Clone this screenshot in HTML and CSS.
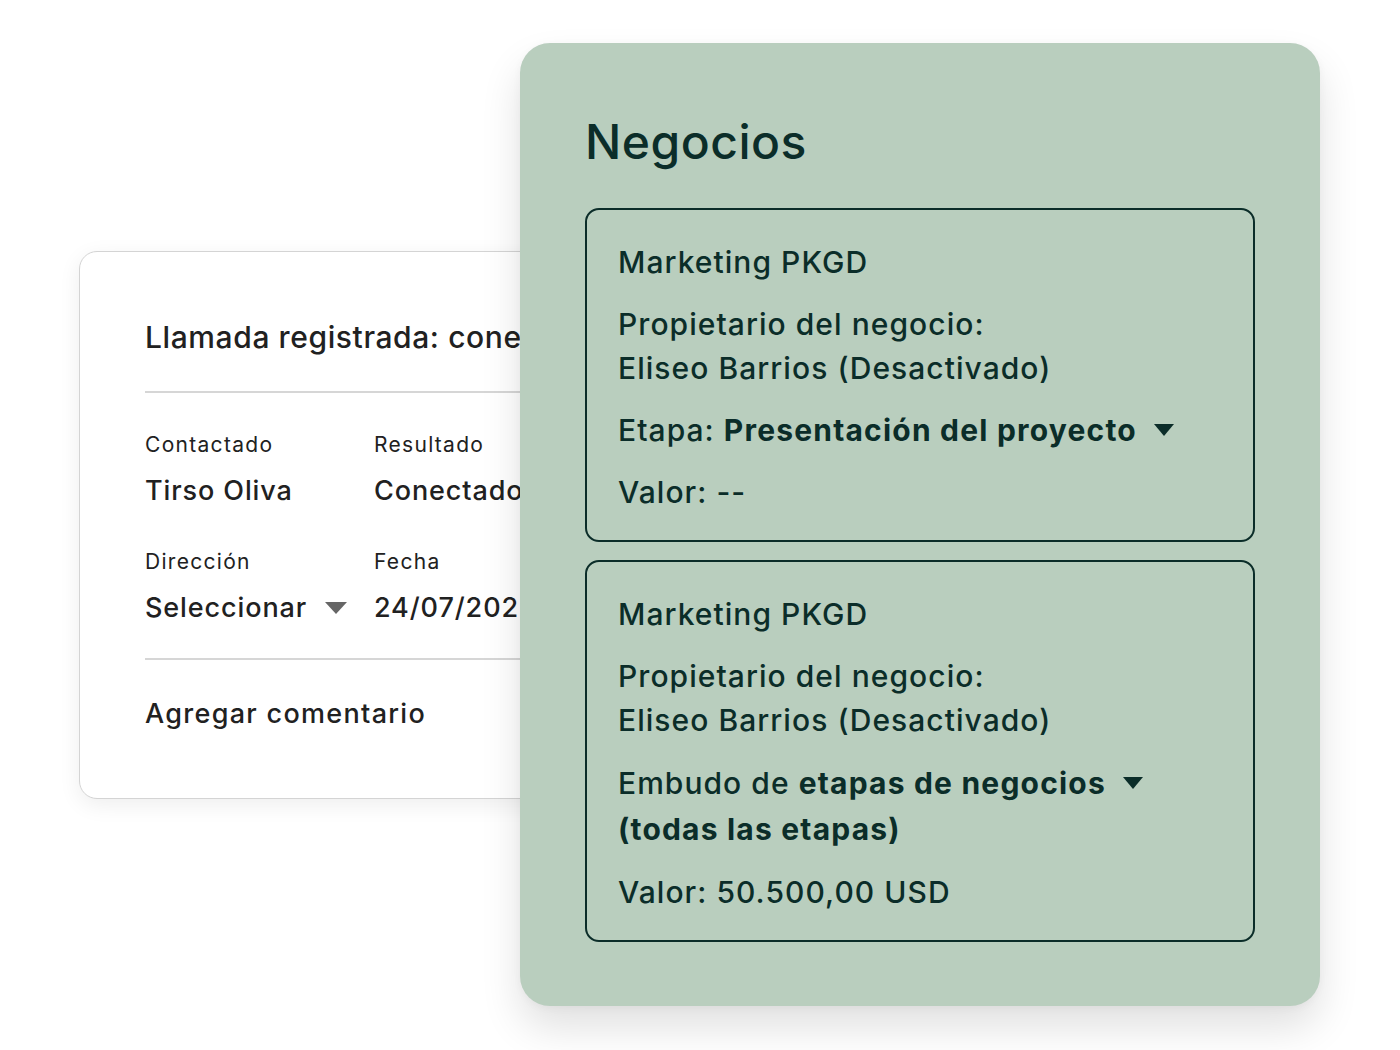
FILE: index.html
```html
<!DOCTYPE html>
<html lang="es">
<head>
<meta charset="utf-8">
<title>Negocios</title>
<link rel="stylesheet" href="styles.css">
</head>
<body>
<div class="stage">
  <section class="call-card">
    <h2 class="call-title">Llamada registrada: conectado</h2>
    <div class="divider top"></div>
    <div class="fields">
      <div class="field">
        <div class="label">Contactado</div>
        <div class="value">Tirso Oliva</div>
      </div>
      <div class="field">
        <div class="label">Resultado</div>
        <div class="value">Conectado</div>
      </div>
      <div class="field">
        <div class="label">Dirección</div>
        <div class="value select">Seleccionar <span class="caret grey"></span></div>
      </div>
      <div class="field">
        <div class="label">Fecha</div>
        <div class="value">24/07/2025</div>
      </div>
    </div>
    <div class="divider"></div>
    <div class="comment">Agregar comentario</div>
  </section>

  <section class="deals">
    <h1 class="deals-title">Negocios</h1>
    <div class="deal">
      <div class="line">Marketing PKGD</div>
      <div class="line">Propietario del negocio:<br>Eliseo Barrios (Desactivado)</div>
      <div class="line">Etapa: <b>Presentación del proyecto</b> <span class="caret dark"></span></div>
      <div class="line">Valor: --</div>
    </div>
    <div class="deal">
      <div class="line">Marketing PKGD</div>
      <div class="line">Propietario del negocio:<br>Eliseo Barrios (Desactivado)</div>
      <div class="line tall">Embudo de <b>etapas de negocios</b> <span class="caret dark"></span><br><b>(todas las etapas)</b></div>
      <div class="line">Valor: 50.500,00 USD</div>
    </div>
  </section>
</div>
</body>
</html>
```

FILE: styles.css
```css
* { box-sizing: border-box; }
html, body {
  margin: 0;
  padding: 0;
  background: #ffffff;
}
body {
  font-family: Inter, "Noto Sans", sans-serif;
  width: 1400px;
  height: 1050px;
  overflow: hidden;
}
.stage {
  position: relative;
  width: 1400px;
  height: 1050px;
  padding-top: 251px;
  padding-left: 79px;
}

/* Left card */
.call-card {
  width: 720px;
  height: 548px;
  background: #fff;
  border: 1px solid #d4d4d4;
  border-radius: 18px;
  box-shadow: 0 6px 22px rgba(0, 0, 0, 0.07);
  padding: 63px 0 0 65px;
  color: #212121;
  overflow: hidden;
}
.call-title {
  margin: 0;
  font-size: 30px;
  line-height: 44px;
  font-weight: 500;
  white-space: nowrap;
  letter-spacing: 0.6px;
}
.divider {
  height: 2px;
  background: #d6d6d6;
  width: 700px;
}
.divider.top {
  margin-top: 32px;
}
.fields {
  display: grid;
  grid-template-columns: 229px 260px;
  row-gap: 38px;
  padding: 37px 0 32px;
}
.label {
  font-size: 21px;
  line-height: 30px;
  font-weight: 400;
  letter-spacing: 1.3px;
}
.value {
  margin-top: 13px;
  font-size: 27px;
  line-height: 36px;
  font-weight: 500;
  white-space: nowrap;
  letter-spacing: 0.9px;
}
.select {
  display: flex;
  align-items: center;
  gap: 18px;
}
.comment {
  margin-top: 36px;
  font-size: 27px;
  line-height: 36px;
  font-weight: 500;
  letter-spacing: 1.3px;
}

.caret {
  display: inline-block;
  width: 0;
  height: 0;
  border-left: 11px solid transparent;
  border-right: 11px solid transparent;
  vertical-align: middle;
}
.caret.grey {
  border-top: 12px solid #666666;
}
.caret.dark {
  border-left-width: 10px;
  border-right-width: 10px;
  border-top: 12px solid #0b2d29;
  margin-left: 8px;
  position: relative;
  top: -3px;
}

/* Green panel */
.deals {
  position: absolute;
  left: 520px;
  top: 43px;
  width: 800px;
  height: 963px;
  background: #b9cebe;
  border-radius: 30px;
  box-shadow: 0 22px 40px rgba(0, 0, 0, 0.12), 0 2px 8px rgba(0, 0, 0, 0.04);
  padding: 69px 65px 0 65px;
  color: #0b2d29;
  display: flex;
  flex-direction: column;
  gap: 18px;
}
.deals-title {
  margin: 0 0 18px 0;
  font-size: 48px;
  line-height: 60px;
  font-weight: 500;
  letter-spacing: 0.5px;
}
.deal {
  border: 2px solid #0b2d29;
  border-radius: 14px;
  padding: 30px 20px 26px 31px;
  display: flex;
  flex-direction: column;
  gap: 18px;
}
.line {
  font-size: 30px;
  line-height: 44px;
  font-weight: 500;
  white-space: nowrap;
  letter-spacing: 1.05px;
}
.line.tall {
  line-height: 46px;
}
.line b {
  font-weight: 700;
  letter-spacing: 1.2px;
}
```
